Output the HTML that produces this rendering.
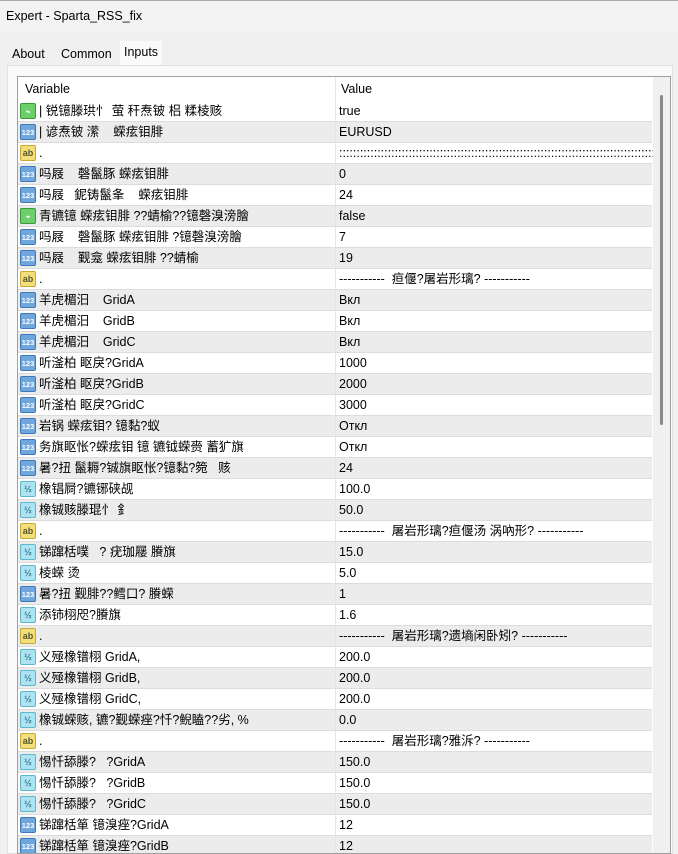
<!DOCTYPE html>
<html><head><meta charset="utf-8"><style>
body{margin:0;width:678px;height:854px;background:#f0f0f0;font-family:"Liberation Sans","Noto Sans CJK SC",sans-serif;font-size:12.5px;color:#000;overflow:hidden;position:relative}
.title{position:absolute;left:0;top:0;width:678px;height:32px;background:#f3f3f3;border-top:1px solid #aaa;box-sizing:border-box}
.title span{position:absolute;left:6px;top:8px;font-size:12.5px}
.tab{position:absolute;top:43px;height:22px;font-size:12.5px;line-height:22px;padding:0 4px}
.panel{position:absolute;left:7px;top:65px;width:666px;height:789px;background:#fafafa;border:1px solid #e0e0e0;box-sizing:border-box}
.box{position:absolute;left:17px;top:76px;width:654px;height:778px;background:#fff;border:1px solid #a0a0a0;box-sizing:border-box;overflow:hidden}
.hdr{position:absolute;left:0;top:0;height:24px;width:634px;line-height:24px;font-size:12.5px}
.row{position:absolute;left:0;width:634px;height:21px;box-sizing:border-box;border-bottom:1px solid #dcdcdc;line-height:20px;white-space:nowrap}
.row.g{background:#ececec}
.v{position:absolute;left:21px;width:296px;overflow:hidden}
.val{position:absolute;left:321px}
.sep{position:absolute;left:317px;top:0;width:1px;height:100%;background:#e6e6e6}
.ic{position:absolute;left:2px;top:2px;width:16px;height:16px;border-radius:2px;font-size:7.5px;line-height:15px;text-align:center;font-weight:bold}
.n{background:#6fa7dc;color:#fff;border:1px solid #3f78b8;box-sizing:border-box}
.a{background:#f3df7a;color:#553;border:1px solid #c8a830;box-sizing:border-box;font-size:9px}
.b{background:#6ccf6c;border:1px solid #3a9a3a;box-sizing:border-box;color:#fff}
.h{background:#aee3ef;border:1px solid #5cb7cf;box-sizing:border-box;color:#2a7c98;font-size:9px}
.sb{position:absolute;left:635px;top:0;width:17px;height:778px;background:#f0f0f0}
.th{position:absolute;left:7px;top:18px;width:3px;height:330px;background:#8a8a8a;border-radius:2px}
</style></head><body>
<div class="title"><span>Expert - Sparta_RSS_fix</span></div>
<div class="tab" style="left:8px">About</div>
<div class="tab" style="left:57px">Common</div>
<div class="tab" style="left:120px;top:41px;background:#fafafa;height:24px">Inputs</div>
<div class="panel"></div>
<div class="box">
<div class="hdr"><span style="position:absolute;left:7px">Variable</span><span style="position:absolute;left:323px">Value</span><div class="sep"></div></div>
<div id="rows"></div>
<div class="sb"><div class="th"></div></div>
</div>
<script>
var d=[
["b","| 锐镱滕珙忄 萤 秆焘铍 梠 糅棱赅","true"],
["n","| 谚焘铍 潆 &nbsp;&nbsp; 蝾痃钼腓","EURUSD"],
["a",".",":::::::::::::::::::::::::::::::::::::::::::::::::::::::::::::::::::::::::::::::::::::::::::::::::..."],
["n","吗屐 &nbsp;&nbsp; 磬鬣豚 蝾痃钼腓","0"],
["n","吗屐 &nbsp; 鈮铸鬣夆 &nbsp;&nbsp; 蝾痃钼腓","24"],
["b","青镳镱 蝾痃钼腓 ??蜻榆??镱磬溴滂膾","false"],
["n","吗屐 &nbsp;&nbsp; 磬鬣豚 蝾痃钼腓 ?镱磬溴滂膾","7"],
["n","吗屐 &nbsp;&nbsp; 觐龛 蝾痃钼腓 ??蜻榆","19"],
["a",".","----------- &nbsp;疸偃?屠岩形璃? -----------"],
["n","羊虎楣汨 &nbsp;&nbsp; GridA","Вкл"],
["n","羊虎楣汨 &nbsp;&nbsp; GridB","Вкл"],
["n","羊虎楣汨 &nbsp;&nbsp; GridC","Вкл"],
["n","听滏柏 眍戾?GridA","1000"],
["n","听滏柏 眍戾?GridB","2000"],
["n","听滏柏 眍戾?GridC","3000"],
["n","岩锅 蝾痃钼? 镱黏?蚁","Откл"],
["n","务旗眍怅?蝾痃钼 镱 镳钺蝾赍 蓄犷旗","Откл"],
["n","暑?扭 鬣耨?铖旗眍怅?镱黏?箢 &nbsp; 赅","24"],
["h","橡锠屙?镳铘硖觇","100.0"],
["h","橡铖赅滕琨忄 釒","50.0"],
["a",".","----------- &nbsp;屠岩形璃?疸偃汤 涡吶形? -----------"],
["h","锑蹿栝噗 &nbsp; ? 疣珈屦 賸旗","15.0"],
["h","棱蝾 烫","5.0"],
["n","暑?扭 觐腓??鳕口? 賸蝾","1"],
["h","添铈栩咫?賸旗","1.6"],
["a",".","----------- &nbsp;屠岩形璃?遗墒闲卧矧? -----------"],
["h","义殛橡镨栩 GridA,","200.0"],
["h","义殛橡镨栩 GridB,","200.0"],
["h","义殛橡镨栩 GridC,","200.0"],
["h","橡铖蝾赅, 镳?觐蝾痤?忏?鲵瞌??劣, %","0.0"],
["a",".","----------- &nbsp;屠岩形璃?雅泝? -----------"],
["h","惕忏舔滕? &nbsp; ?GridA","150.0"],
["h","惕忏舔滕? &nbsp; ?GridB","150.0"],
["h","惕忏舔滕? &nbsp; ?GridC","150.0"],
["n","锑蹿栝箪 镱溴痤?GridA","12"],
["n","锑蹿栝箪 镱溴痤?GridB","12"]];
var lab={n:"123",a:"ab",b:"⌁",h:"½"};
var h="";
d.forEach(function(r,i){h+='<div class="row'+(i%2?' g':'')+'" style="top:'+(24+i*21)+'px"><div class="ic '+r[0]+'">'+lab[r[0]]+'</div><span class="v">'+r[1]+'</span><div class="sep"></div><span class="val">'+r[2]+'</span></div>';});
document.getElementById("rows").innerHTML=h;
</script>
</body></html>
